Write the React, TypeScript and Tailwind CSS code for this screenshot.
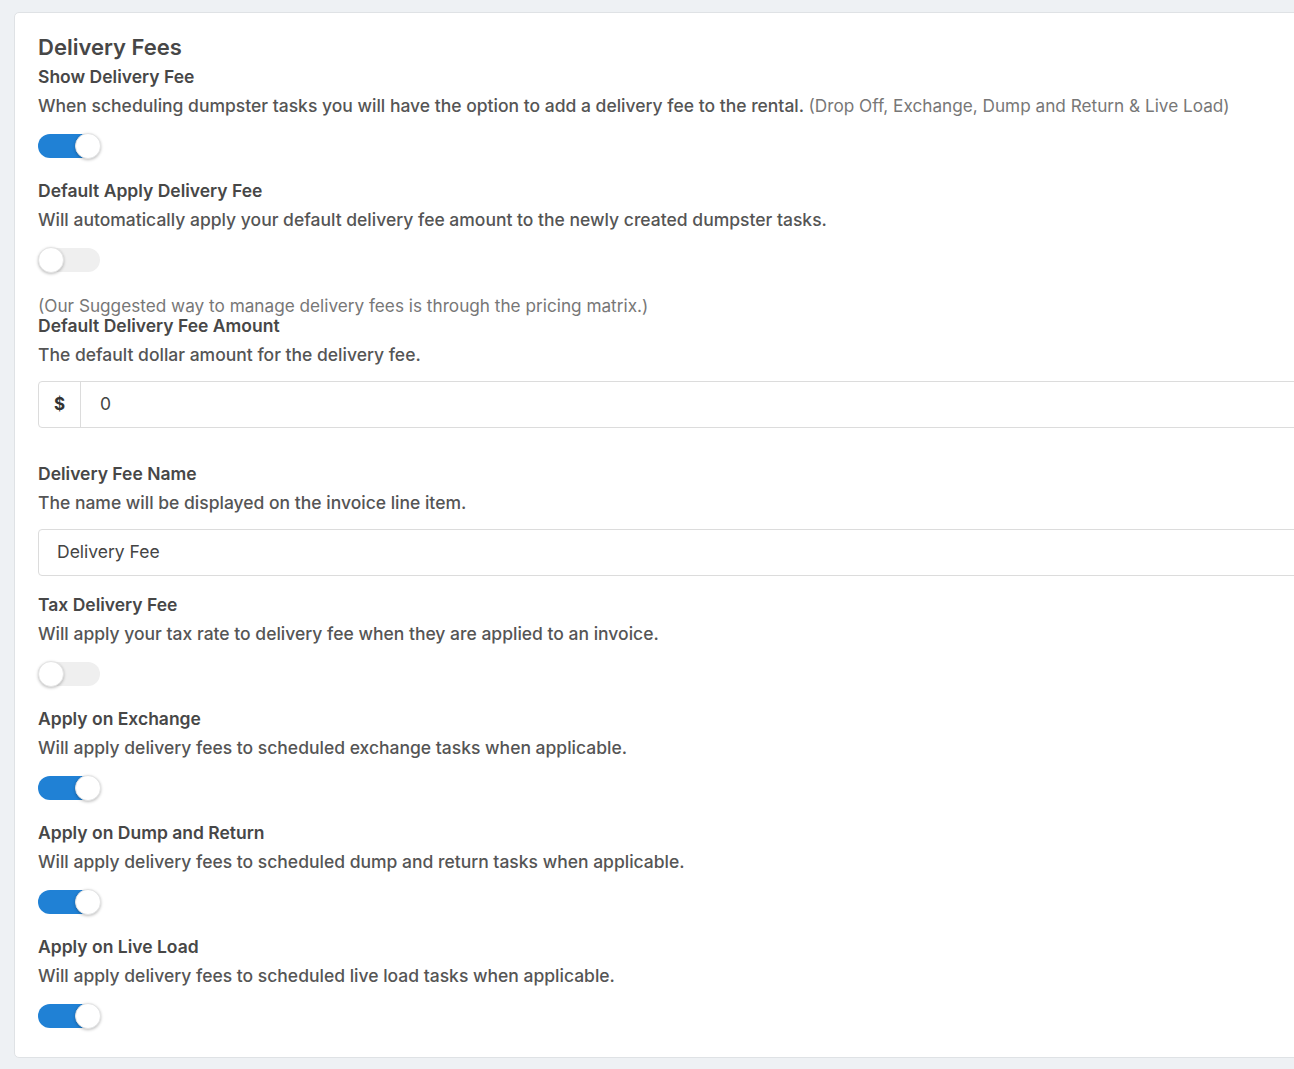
const font = { fontFamily: 'Inter, "Noto Sans", sans-serif' };

function Toggle({ on }: { on: boolean }) {
  return (
    <div className="relative h-[26px] w-[64px]">
      <div className={`absolute left-0 top-[1px] h-[24px] w-[62px] rounded-full ${on ? "bg-[#2081d5]" : "bg-[#efefef]"}`} />
      <div
        className={`absolute top-0 h-[26px] w-[26px] rounded-full border border-[#e4e4e4] bg-white shadow-[0_1px_3px_rgba(0,0,0,0.25)] ${on ? "left-[37px]" : "left-0"}`}
      />
    </div>
  );
}

function ToggleSetting({ label, desc, on }: { label: string; desc: React.ReactNode; on: boolean }) {
  return (
    <div>
      <div className="text-[17.5px] font-semibold leading-[22px] text-[#474747]">{label}</div>
      <div className="mt-[7px] text-[17.5px] font-medium leading-[22px] text-[#555]">{desc}</div>
      <div className="mt-[16px]">
        <Toggle on={on} />
      </div>
    </div>
  );
}

export default function App() {
  return (
    <div className="h-[1069px] w-[1294px] overflow-hidden bg-[#eef1f4] pl-[14px] pt-[12px]" style={font}>
      <div className="w-[1330px] rounded-[5px] border border-[#dfe2e5] bg-white pb-[28px] pl-[23px] pr-[24px] pt-[20px]">
        <h1 className="text-[22px] font-semibold leading-[28px] text-[#474747]">Delivery Fees</h1>

        <div className="mt-[5px]">
          <ToggleSetting
            label="Show Delivery Fee"
            on={true}
            desc={
              <>
                When scheduling dumpster tasks you will have the option to add a delivery fee to the rental.{" "}
                <span className="text-[17.2px] font-normal text-[#777]">
                  (Drop Off, Exchange, Dump and Return &amp; Live Load)
                </span>
              </>
            }
          />
        </div>

        <div className="mt-[21px]">
          <ToggleSetting
            label="Default Apply Delivery Fee"
            on={false}
            desc="Will automatically apply your default delivery fee amount to the newly created dumpster tasks."
          />
        </div>

        <div className="mt-[22px] text-[17.2px] leading-[22px] text-[#777]">
          (Our Suggested way to manage delivery fees is through the pricing matrix.)
        </div>
        <div className="mt-[-1px] text-[17.5px] font-semibold leading-[20px] text-[#474747]">
          Default Delivery Fee Amount
        </div>
        <div className="mt-[8px] text-[17.5px] font-medium leading-[22px] text-[#555]">
          The default dollar amount for the delivery fee.
        </div>
        <div className="mt-[15px] flex h-[47px] rounded-[4px] border border-[#dcdcdc]">
          <div className="flex w-[42px] items-center justify-center border-r border-[#dcdcdc] text-[17px] font-bold text-[#333]">
            $
          </div>
          <div className="flex items-center pl-[19px] text-[17.5px] text-[#444]">0</div>
        </div>

        <div className="mt-[35px] text-[17.5px] font-semibold leading-[22px] text-[#474747]">Delivery Fee Name</div>
        <div className="mt-[7px] text-[17.5px] font-medium leading-[22px] text-[#555]">
          The name will be displayed on the invoice line item.
        </div>
        <div className="mt-[15px] flex h-[47px] items-center rounded-[4px] border border-[#dcdcdc] pl-[18px] text-[17.5px] text-[#444]">
          Delivery Fee
        </div>

        <div className="mt-[18px]">
          <ToggleSetting
            label="Tax Delivery Fee"
            on={false}
            desc="Will apply your tax rate to delivery fee when they are applied to an invoice."
          />
        </div>
        <div className="mt-[21px]">
          <ToggleSetting
            label="Apply on Exchange"
            on={true}
            desc="Will apply delivery fees to scheduled exchange tasks when applicable."
          />
        </div>
        <div className="mt-[21px]">
          <ToggleSetting
            label="Apply on Dump and Return"
            on={true}
            desc="Will apply delivery fees to scheduled dump and return tasks when applicable."
          />
        </div>
        <div className="mt-[21px]">
          <ToggleSetting
            label="Apply on Live Load"
            on={true}
            desc="Will apply delivery fees to scheduled live load tasks when applicable."
          />
        </div>
      </div>
    </div>
  );
}
